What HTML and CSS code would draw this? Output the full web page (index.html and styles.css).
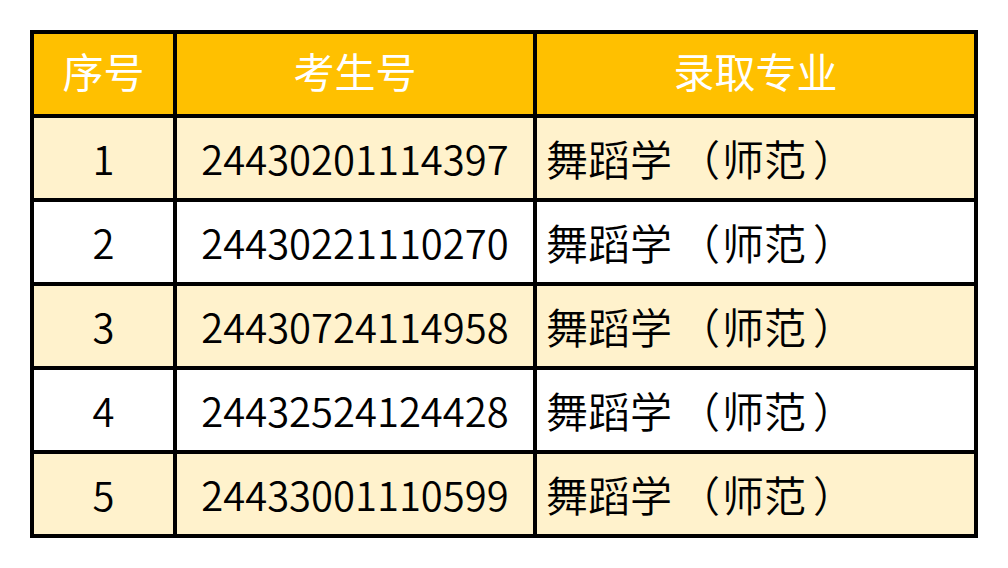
FILE: index.html
```html
<!DOCTYPE html>
<html lang="zh-CN">
<head>
<meta charset="utf-8">
<link rel="stylesheet" href="styles.css">
</head>
<body>
<table class="admit">
  <thead>
    <tr><th class="c1">序号</th><th class="c2">考生号</th><th class="c3">录取专业</th></tr>
  </thead>
  <tbody>
    <tr class="alt"><td class="c1">1</td><td class="c2">24430201114397</td><td class="c3">舞蹈学<span class="po">（</span>师范<span class="pc">）</span></td></tr>
    <tr><td class="c1">2</td><td class="c2">24430221110270</td><td class="c3">舞蹈学<span class="po">（</span>师范<span class="pc">）</span></td></tr>
    <tr class="alt"><td class="c1">3</td><td class="c2">24430724114958</td><td class="c3">舞蹈学<span class="po">（</span>师范<span class="pc">）</span></td></tr>
    <tr><td class="c1">4</td><td class="c2">24432524124428</td><td class="c3">舞蹈学<span class="po">（</span>师范<span class="pc">）</span></td></tr>
    <tr class="alt"><td class="c1">5</td><td class="c2">24433001110599</td><td class="c3">舞蹈学<span class="po">（</span>师范<span class="pc">）</span></td></tr>
  </tbody>
</table>
</body>
</html>
```
FILE: styles.css
```css
html, body {
  margin: 0;
  padding: 0;
  background: #ffffff;
}
body {
  padding: 30px 0 0 30px;
  font-family: "Noto Sans CJK SC", "Noto Sans", sans-serif;
}
.admit {
  border-collapse: separate;
  border-spacing: 0;
  border-top: 4px solid #000;
  border-left: 4px solid #000;
  table-layout: fixed;
  width: 948px;
}
.admit th, .admit td {
  border-right: 4px solid #000;
  border-bottom: 4px solid #000;
  height: 84px;
  padding: 0;
  font-size: 40px;
  line-height: 1;
  text-align: center;
  vertical-align: middle;
  box-sizing: border-box;
}
.admit th {
  background: #ffc000;
  color: #ffffff;
  font-weight: 400;
  font-size: 41px;
  padding-bottom: 8px;
}
.admit td {
  color: #000;
  font-weight: 350;
}
.admit .c1 { width: 143px; }
.admit .c2 { width: 360px; }
.admit .c3 { width: 441px; }
.admit td.c3 {
  text-align: left;
  padding-left: 9px;
  font-size: 42px;
  white-space: nowrap;
}
.po, .pc {
  display: inline-block;
  font-family: "Noto Sans CJK JP", "Noto Sans CJK SC", sans-serif;
  text-spacing-trim: space-all;
}
.po { padding-left: 6px; margin-right: 2px; }
.pc { padding-left: 7px; }
.admit tr.alt td {
  background: #fff2cc;
}
```
